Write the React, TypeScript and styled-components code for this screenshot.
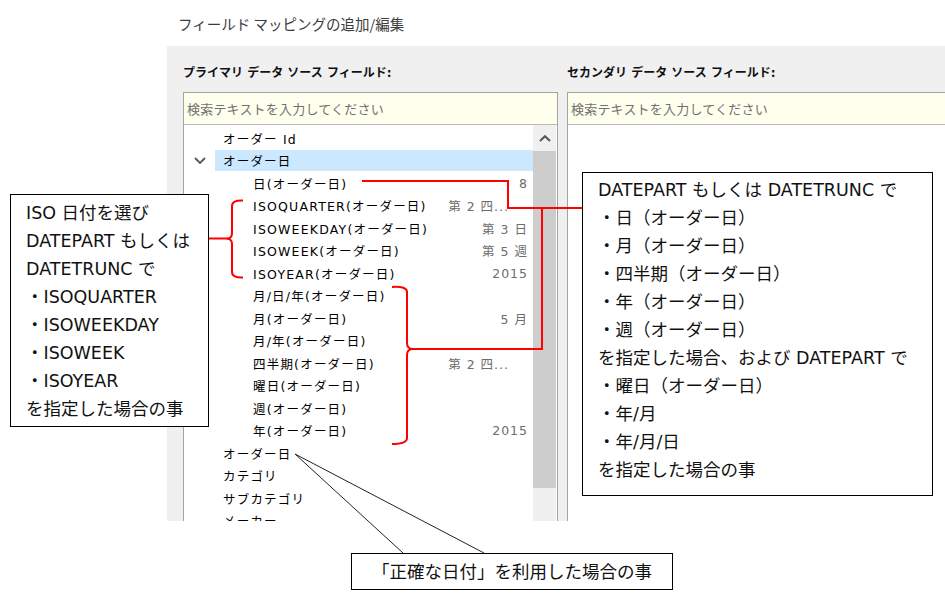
import styled, { createGlobalStyle } from "styled-components";

const GlobalStyle = createGlobalStyle`
  html, body {
    margin: 0;
    padding: 0;
    background: #ffffff;
  }
  body {
    width: 945px;
    height: 601px;
    overflow: hidden;
    font-family: "Noto Sans CJK JP", sans-serif;
  }
`;

const Page = styled.div`
  position: relative;
  width: 945px;
  height: 601px;
  overflow: hidden;
  background: #ffffff;
`;

const TitleBar = styled.div`
  height: 46px;
  display: flex;
  align-items: center;
  padding-left: 178px;
  font-family: "Noto Sans CJK JP", sans-serif;
  font-size: 14.5px;
  color: #3c3c3c;
  box-sizing: border-box;
`;

const Dialog = styled.div`
  margin-left: 167px;
  width: 778px;
  height: 475px;
  background: #f0f0f0;
  overflow: hidden;
  box-sizing: border-box;
  padding: 19px 0 0 16px;
  display: grid;
  grid-template-columns: 375px 420px;
  grid-template-rows: 16px 1fr;
  column-gap: 9px;
  row-gap: 11px;
`;

const FieldLabel = styled.div`
  font-family: "DejaVu Sans", "Noto Sans CJK JP", sans-serif;
  font-size: 12px;
  font-weight: bold;
  line-height: 16px;
  color: #111;
  white-space: nowrap;
`;

// the dialog clips the panels at its bottom edge, as in the cropped screenshot
const Panel = styled.div`
  border: 1px solid #a3a3a3;
  background: #ffffff;
  height: 470px;
  display: flex;
  flex-direction: column;
`;

const SearchBox = styled.div`
  height: 31px;
  flex: none;
  background: #ffffee;
  border-bottom: 1px solid #b9b9b9;
  display: flex;
  align-items: center;
  padding-left: 3px;
  font-family: "Noto Sans CJK JP", sans-serif;
  font-size: 13px;
  letter-spacing: 0.2px;
  color: #6f6f6f;
`;

const ListArea = styled.div`
  flex: 1;
  display: flex;
  min-height: 0;
`;

const Rows = styled.div`
  flex: 1;
  padding-top: 2px;
  overflow: hidden;
`;

const Row = styled.div`
  height: 22.5px;
  display: grid;
  grid-template-columns: 31px 1fr;
  align-items: center;
`;

const Toggle = styled.div`
  display: flex;
  align-items: center;
  justify-content: center;
`;

const RowContent = styled.div<{ $level: number; $selected?: boolean }>`
  height: 21px;
  display: flex;
  align-items: center;
  justify-content: space-between;
  padding-left: ${(p) => 8 + p.$level * 30}px;
  padding-right: 5px;
  background: ${(p) => (p.$selected ? "#cce8ff" : "transparent")};
  font-family: "DejaVu Sans", "Noto Sans CJK JP", sans-serif;
  font-size: 12.5px;
  letter-spacing: 1.2px;
  color: #000;
  white-space: nowrap;
`;

const Value = styled.span<{ $clipped?: boolean }>`
  color: #6d6d6d;
  letter-spacing: 1px;
  padding-right: ${(p) => (p.$clipped ? 19 : 0)}px;
`;

const Scrollbar = styled.div`
  width: 23px;
  margin-right: 1px;
  display: flex;
  flex-direction: column;
  background: #f0f0f0;
`;

const ScrollButton = styled.div`
  height: 26px;
  display: flex;
  align-items: center;
  justify-content: center;
`;

const ScrollThumb = styled.div`
  height: 337px;
  background: #cdcdcd;
`;

const Overlay = styled.svg`
  position: absolute;
  left: 0;
  top: 0;
  z-index: 1;
  pointer-events: none;
`;

const Callout = styled.div<{ $left: number; $top: number; $width: number; $height: number }>`
  position: absolute;
  z-index: 2;
  left: ${(p) => p.$left}px;
  top: ${(p) => p.$top}px;
  width: ${(p) => p.$width}px;
  height: ${(p) => p.$height}px;
  box-sizing: border-box;
  border: 1px solid #000;
  background: #ffffff;
  font-family: "DejaVu Sans", "Noto Sans CJK JP", sans-serif;
  font-size: 17.5px;
  line-height: 28px;
  color: #111;
  white-space: nowrap;
`;

const NoteLines = styled.div<{ $top: number }>`
  padding: ${(p) => p.$top}px 0 0 15px;
`;

const CenteredNote = styled.div`
  height: 100%;
  display: flex;
  align-items: center;
  justify-content: center;
`;

type Field = {
  label: string;
  level: number;
  value?: string;
  clipped?: boolean;
  expanded?: boolean;
  selected?: boolean;
};

const fields: Field[] = [
  { label: "オーダー Id", level: 0 },
  { label: "オーダー日", level: 0, expanded: true, selected: true },
  { label: "日(オーダー日)", level: 1, value: "8" },
  { label: "ISOQUARTER(オーダー日)", level: 1, value: "第 2 四...", clipped: true },
  { label: "ISOWEEKDAY(オーダー日)", level: 1, value: "第 3 日" },
  { label: "ISOWEEK(オーダー日)", level: 1, value: "第 5 週" },
  { label: "ISOYEAR(オーダー日)", level: 1, value: "2015" },
  { label: "月/日/年(オーダー日)", level: 1 },
  { label: "月(オーダー日)", level: 1, value: "5 月" },
  { label: "月/年(オーダー日)", level: 1 },
  { label: "四半期(オーダー日)", level: 1, value: "第 2 四...", clipped: true },
  { label: "曜日(オーダー日)", level: 1 },
  { label: "週(オーダー日)", level: 1 },
  { label: "年(オーダー日)", level: 1, value: "2015" },
  { label: "オーダー日", level: 0 },
  { label: "カテゴリ", level: 0 },
  { label: "サブカテゴリ", level: 0 },
  { label: "メーカー", level: 0 },
];

const isoNote = [
  "ISO 日付を選び",
  "DATEPART もしくは",
  "DATETRUNC で",
  "・ISOQUARTER",
  "・ISOWEEKDAY",
  "・ISOWEEK",
  "・ISOYEAR",
  "を指定した場合の事",
];

const datepartNote = [
  "DATEPART もしくは DATETRUNC で",
  "・日（オーダー日）",
  "・月（オーダー日）",
  "・四半期（オーダー日）",
  "・年（オーダー日）",
  "・週（オーダー日）",
  "を指定した場合、および DATEPART で",
  "・曜日（オーダー日）",
  "・年/月",
  "・年/月/日",
  "を指定した場合の事",
];

const ChevronDown = () => (
  <svg width="12" height="7" viewBox="0 0 12 7">
    <path d="M1 1 L6 6 L11 1" fill="none" stroke="#555" strokeWidth="1.8" />
  </svg>
);

const ChevronUp = () => (
  <svg width="12" height="7" viewBox="0 0 12 7">
    <path d="M1 6 L6 1.2 L11 6" fill="none" stroke="#555" strokeWidth="2" />
  </svg>
);

const FieldList = ({ items }: { items: Field[] }) => (
  <ListArea>
    <Rows>
      {items.map((f, i) => (
        <Row key={i}>
          <Toggle>{f.expanded && <ChevronDown />}</Toggle>
          <RowContent $level={f.level} $selected={f.selected}>
            <span>{f.label}</span>
            {f.value && <Value $clipped={f.clipped}>{f.value}</Value>}
          </RowContent>
        </Row>
      ))}
    </Rows>
    <Scrollbar>
      <ScrollButton>
        <ChevronUp />
      </ScrollButton>
      <ScrollThumb />
    </Scrollbar>
  </ListArea>
);

const App = () => {
  return (
    <Page>
      <GlobalStyle />
      <TitleBar>フィールド マッピングの追加/編集</TitleBar>
      <Dialog>
        <FieldLabel>プライマリ データ ソース フィールド:</FieldLabel>
        <FieldLabel>セカンダリ データ ソース フィールド:</FieldLabel>
        <Panel>
          <SearchBox>検索テキストを入力してください</SearchBox>
          <FieldList items={fields} />
        </Panel>
        <Panel>
          <SearchBox>検索テキストを入力してください</SearchBox>
        </Panel>
      </Dialog>

      {/* annotation brackets and leader lines drawn over the dialog */}
      <Overlay width="945" height="601" viewBox="0 0 945 601">
        <g fill="none" stroke="#ff0000" strokeWidth="2">
          <path d="M243 200.5 Q232 200 232 206 L232 233 Q232 238.5 227 238.5 Q232 239 232 244 L232 272 Q232 278 243 277.5" />
          <path d="M208 238.5 L228 238.5" />
          <path d="M392 287 Q407 286 407 292 L407 343 Q407 349 413 349 Q407 349 407 355 L407 438 Q407 444 392 444" />
          <path d="M412 349 L542 349 L542 208" />
          <path d="M362 181 L508 181 L508 208 L582 208" />
        </g>
        <g fill="none" stroke="#222" strokeWidth="1">
          <path d="M295 454 L403 553" />
          <path d="M295 454 L484 553" />
        </g>
      </Overlay>

      <Callout $left={10} $top={194} $width={199} $height={233}>
        <NoteLines $top={4}>
          {isoNote.map((line) => (
            <div key={line}>{line}</div>
          ))}
        </NoteLines>
      </Callout>

      <Callout $left={582} $top={172} $width={351} $height={324}>
        <NoteLines $top={3}>
          {datepartNote.map((line) => (
            <div key={line}>{line}</div>
          ))}
        </NoteLines>
      </Callout>

      <Callout $left={351} $top={553} $width={322} $height={37}>
        <CenteredNote>「正確な日付」を利用した場合の事</CenteredNote>
      </Callout>
    </Page>
  );
};

export default App;
